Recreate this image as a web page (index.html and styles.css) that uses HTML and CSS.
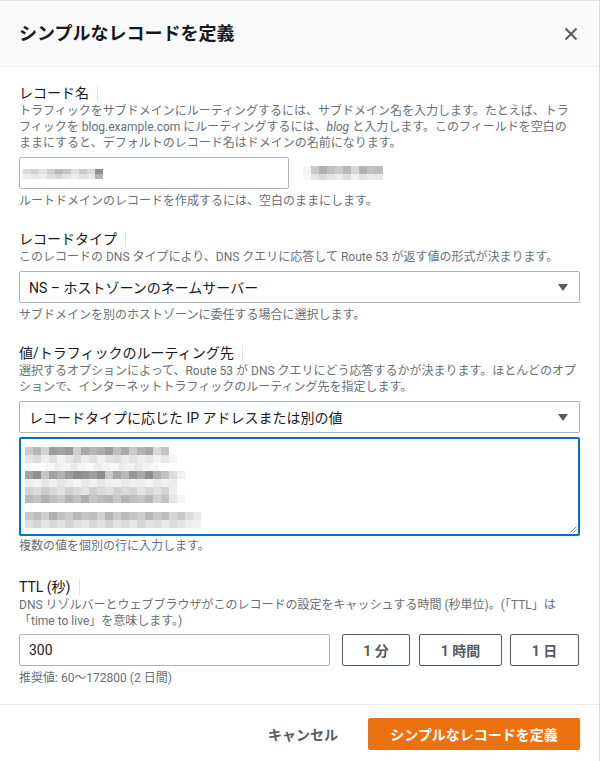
FILE: index.html
```html
<!DOCTYPE html>
<html lang="ja">
<head>
<meta charset="utf-8">
<title>シンプルなレコードを定義</title>
<link rel="stylesheet" href="styles.css">
</head>
<body>
<div class="modal">
  <header class="modal-header">
    <h2 class="title">シンプルなレコードを定義</h2>
    <button class="close" aria-label="閉じる">
      <svg width="14" height="14" viewBox="0 0 14 14"><path d="M1.5 1.5L12.5 12.5M12.5 1.5L1.5 12.5" stroke="#545b64" stroke-width="2" fill="none"/></svg>
    </button>
  </header>

  <div class="modal-body">
    <section class="field">
      <div class="label">レコード名<span class="info"></span></div>
      <p class="desc">トラフィックをサブドメインにルーティングするには、サブドメイン名を入力します。たとえば、トラ<br>フィックを blog.example.com にルーティングするには、<i>blog</i> と入力します。このフィールドを空白の<br>ままにすると、デフォルトのレコード名はドメインの名前になります。</p>
      <div class="control-row">
        <div class="input input-name"><span class="mz mz-name"></span></div>
        <span class="mz mz-domain"></span>
      </div>
      <p class="hint">ルートドメインのレコードを作成するには、空白のままにします。</p>
    </section>

    <section class="field">
      <div class="label">レコードタイプ<span class="info"></span></div>
      <p class="desc">このレコードの DNS タイプにより、DNS クエリに応答して Route 53 が返す値の形式が決まります。</p>
      <div class="control-row">
        <div class="select"><span>NS – ホストゾーンのネームサーバー</span><svg class="caret" width="10" height="7" viewBox="0 0 10 7"><path d="M0 0H10L5 7Z" fill="#545b64"/></svg></div>
      </div>
      <p class="hint">サブドメインを別のホストゾーンに委任する場合に選択します。</p>
    </section>

    <section class="field">
      <div class="label">値/トラフィックのルーティング先<span class="info"></span></div>
      <p class="desc">選択するオプションによって、Route 53 が DNS クエリにどう応答するかが決まります。ほとんどのオプ<br>ションで、インターネットトラフィックのルーティング先を指定します。</p>
      <div class="control-row">
        <div class="select"><span>レコードタイプに応じた IP アドレスまたは別の値</span><svg class="caret" width="10" height="7" viewBox="0 0 10 7"><path d="M0 0H10L5 7Z" fill="#545b64"/></svg></div>
      </div>
      <div class="textarea">
        <span class="mz ra"></span>
        <span class="mz rb"></span>
        <span class="mz rc"></span>
        <span class="mz rd"></span>
        <span class="mz re"></span>
        <span class="mz rf"></span>
        <span class="mz rg"></span>
        <span class="mz gap"></span>
        <span class="mz rh"></span>
        <span class="mz ri"></span>
        <svg class="grip" width="8" height="8" viewBox="0 0 8 8"><path d="M7.5 1.5L1.5 7.5M7.5 4.5L4.5 7.5" stroke="#7d8998" stroke-width="1" fill="none"/></svg>
      </div>
      <p class="hint hint-tight">複数の値を個別の行に入力します。</p>
    </section>

    <section class="field field-ttl">
      <div class="label">TTL (秒)<span class="info"></span></div>
      <p class="desc">DNS リゾルバーとウェブブラウザがこのレコードの設定をキャッシュする時間 (秒単位)。(「TTL」は<br>「time to live」を意味します。)</p>
      <div class="control-row ttl-row">
        <div class="input input-ttl">300</div>
        <button class="btn btn-1m">1 分</button>
        <button class="btn btn-1h">1 時間</button>
        <button class="btn btn-1d">1 日</button>
      </div>
      <p class="hint">推奨値: 60～172800 (2 日間)</p>
    </section>
  </div>

  <footer class="modal-footer">
    <button class="link-btn">キャンセル</button>
    <button class="primary-btn">シンプルなレコードを定義</button>
  </footer>
</div>
</body>
</html>
```

FILE: styles.css
```css
* { box-sizing: border-box; }

html, body {
  margin: 0;
  padding: 0;
  background: #ffffff;
}

body {
  font-family: Roboto, "Noto Sans CJK JP", sans-serif;
  color: #16191f;
}

.modal {
  width: 600px;
  min-height: 761px;
  border-top: 1px solid #e4e6e6;
  border-right: 1px solid #d5dbdb;
  background: #ffffff;
}

.modal-header {
  height: 66px;
  display: flex;
  align-items: center;
  padding: 0 21px 0 19px;
  background: #fafafa;
  border-bottom: 1px solid #eaeded;
}

.title {
  margin: 0;
  font-size: 18px;
  line-height: 24px;
  font-weight: 700;
  color: #16191f;
}

.close {
  margin-left: auto;
  padding: 0;
  border: 0;
  background: none;
  width: 14px;
  height: 14px;
  display: flex;
}

.modal-body {
  padding: 16px 19px 18px;
}

.field + .field { margin-top: 20px; }
.field.field-ttl { margin-top: 23px; }

.label {
  display: flex;
  align-items: center;
  font-size: 14px;
  line-height: 20px;
  font-weight: 400;
  color: #16191f;
}

.info {
  width: 1px;
  height: 16px;
  background: #e1e4e4;
  margin-left: 8px;
}

.desc {
  margin: 0;
  font-size: 12px;
  line-height: 16px;
  color: #687078;
  white-space: nowrap;
}

.desc i { font-style: italic; }

.control-row {
  margin-top: 6px;
  display: flex;
  align-items: center;
}

.input {
  height: 32px;
  border: 1px solid #aab7b8;
  border-radius: 2px;
  padding: 0 9px;
  display: flex;
  align-items: center;
  font-size: 14px;
  color: #16191f;
  background: #fff;
}

.input-name {
  width: 270px;
  padding: 0 3px;
}

.hint {
  margin: 4px 0 0;
  font-size: 12px;
  line-height: 16px;
  color: #687078;
}

.hint-tight { margin-top: 2px; }

.select {
  width: 100%;
  height: 32px;
  border: 1px solid #aab7b8;
  border-radius: 2px;
  padding: 0 11px 0 9px;
  display: flex;
  align-items: center;
  justify-content: space-between;
  font-size: 14px;
  color: #16191f;
}

.textarea {
  position: relative;
  margin-top: 4px;
  height: 99px;
  border: 2px solid #0073bb;
  border-radius: 2px;
  padding: 8px 4px;
}

.grip {
  position: absolute;
  right: 1px;
  bottom: 1px;
}

/* pixelated (blurred-out) values */
.mz {
  display: block;
  height: 8px;
}

.mz-name {
  height: 10px;
  width: 80px;
  margin-top: 2px;
  background:
    linear-gradient(90deg, #dcdcdc 0 8px, #d2d2d2 8px 16px, #e2e2e2 16px 24px, #cfcfcf 24px 32px, #b9b9b9 32px 40px, #c6c6c6 40px 48px, #e0e0e0 48px 56px, #cdcdcd 56px 64px, #d9d9d9 64px 72px, #8f8f8f 72px 80px) top / 100% 5px no-repeat,
    linear-gradient(90deg, #eeeeee 0 8px, #e6e6e6 8px 16px, #ededed 16px 24px, #dddddd 24px 32px, #d6d6d6 32px 40px, #e3e3e3 40px 48px, #eeeeee 48px 56px, #e1e1e1 56px 64px, #e9e9e9 64px 72px, #b5b5b5 72px 80px) bottom / 100% 5px no-repeat;
}

.mz-domain {
  width: 80px;
  height: 14px;
  margin-left: 14px;
  background:
    linear-gradient(90deg, #f4f4f4 0 8px, #c9c9c9 8px 16px, #b0b0b0 16px 24px, #bfbfbf 24px 32px, #cacaca 32px 40px, #b7b7b7 40px 48px, #d8d8d8 48px 56px, #b3b3b3 56px 64px, #c2c2c2 64px 72px, #bdbdbd 72px 80px) top / 100% 8px no-repeat,
    linear-gradient(90deg, #f7f7f7 0 8px, #e6e6e6 8px 16px, #dadada 16px 24px, #e4e4e4 24px 32px, #ececec 32px 40px, #dfdfdf 40px 48px, #f0f0f0 48px 56px, #e2e2e2 56px 64px, #ebebeb 64px 72px, #e7e7e7 72px 80px) bottom / 100% 6px no-repeat;
}

.ra {
  width: 144px;
  background: linear-gradient(90deg, #c9c9c9 0 8px, #b4b4b4 8px 16px, #d2d2d2 16px 24px, #9d9d9d 24px 32px, #a3a3a3 32px 40px, #9a9a9a 40px 48px, #cfcfcf 48px 56px, #a8a8a8 56px 64px, #b6b6b6 64px 72px, #aeaeae 72px 80px, #9c9c9c 80px 88px, #bdbdbd 88px 96px, #a9a9a9 96px 104px, #cacaca 104px 112px, #b3b3b3 112px 120px, #a6a6a6 120px 128px, #d9d9d9 128px 136px, #c4c4c4 136px 144px);
}

.rb {
  width: 152px;
  background: linear-gradient(90deg, #e4e4e4 0 8px, #dcdcdc 8px 16px, #efefef 16px 24px, #e0e0e0 24px 32px, #f2f2f2 32px 40px, #e6e6e6 40px 48px, #dadada 48px 56px, #ececec 56px 64px, #e1e1e1 64px 72px, #f0f0f0 72px 80px, #e3e3e3 80px 88px, #dedede 88px 96px, #ebebeb 96px 104px, #e2e2e2 104px 112px, #eeeeee 112px 120px, #e7e7e7 120px 128px, #f3f3f3 128px 136px, #e9e9e9 136px 144px, #f5f5f5 144px 152px);
}

.rc {
  width: 112px;
  margin-left: 21px;
  background: linear-gradient(90deg, #f6f6f6 0 8px, #eeeeee 8px 16px, #f3f3f3 16px 24px, #ebebeb 24px 32px, #f5f5f5 32px 40px, #fafafa 40px 48px, #ededed 48px 56px, #f4f4f4 56px 64px, #f8f8f8 64px 72px, #ececec 72px 80px, #f1f1f1 80px 88px, #e9e9e9 88px 96px, #f3f3f3 96px 104px, #f7f7f7 104px 112px);
}

.rd {
  width: 160px;
  background: linear-gradient(90deg, #a4a4a4 0 8px, #8f8f8f 8px 16px, #c6c6c6 16px 24px, #a0a0a0 24px 32px, #b2b2b2 32px 40px, #9b9b9b 40px 48px, #8a8a8a 48px 56px, #949494 56px 64px, #9e9e9e 64px 72px, #8c8c8c 72px 80px, #c9c9c9 80px 88px, #a5a5a5 88px 96px, #b9b9b9 96px 104px, #969696 104px 112px, #a8a8a8 112px 120px, #8e8e8e 120px 128px, #b0b0b0 128px 136px, #c2c2c2 136px 144px, #dcdcdc 144px 152px, #f0f0f0 152px 160px);
}

.re {
  width: 152px;
  background: linear-gradient(90deg, #eeeeee 0 8px, #f4f4f4 8px 16px, #e8e8e8 16px 24px, #f1f1f1 24px 32px, #e5e5e5 32px 40px, #ededed 40px 48px, #f6f6f6 48px 56px, #e9e9e9 56px 64px, #f2f2f2 64px 72px, #e6e6e6 72px 80px, #efefef 80px 88px, #f3f3f3 88px 96px, #e7e7e7 96px 104px, #f0f0f0 104px 112px, #ebebeb 112px 120px, #f5f5f5 120px 128px, #e9e9e9 128px 136px, #f2f2f2 136px 144px, #ececec 144px 152px);
}

.rf {
  width: 152px;
  background: linear-gradient(90deg, #d4d4d4 0 8px, #dddddd 8px 16px, #cdcdcd 16px 24px, #d8d8d8 24px 32px, #e2e2e2 32px 40px, #d1d1d1 40px 48px, #dadada 48px 56px, #e4e4e4 56px 64px, #cecece 64px 72px, #d9d9d9 72px 80px, #e0e0e0 80px 88px, #d0d0d0 88px 96px, #dbdbdb 96px 104px, #d3d3d3 104px 112px, #e3e3e3 112px 120px, #d6d6d6 120px 128px, #dfdfdf 128px 136px, #d2d2d2 136px 144px, #ececec 144px 152px);
}

.rg {
  width: 160px;
  background: linear-gradient(90deg, #b9b9b9 0 8px, #c3c3c3 8px 16px, #b1b1b1 16px 24px, #bebebe 24px 32px, #c8c8c8 32px 40px, #b4b4b4 40px 48px, #c0c0c0 48px 56px, #aeaeae 56px 64px, #c5c5c5 64px 72px, #bbbbbb 72px 80px, #b6b6b6 80px 88px, #c9c9c9 88px 96px, #b3b3b3 96px 104px, #bfbfbf 104px 112px, #c6c6c6 112px 120px, #b8b8b8 120px 128px, #d1d1d1 128px 136px, #c4c4c4 136px 144px, #e6e6e6 144px 152px, #f4f4f4 152px 160px);
}

.mz.gap { height: 9px; }

.rh {
  width: 176px;
  background: linear-gradient(90deg, #c7c7c7 0 8px, #bcbcbc 8px 16px, #d0d0d0 16px 24px, #b0b0b0 24px 32px, #c2c2c2 32px 40px, #cbcbcb 40px 48px, #b8b8b8 48px 56px, #c5c5c5 56px 64px, #bfbfbf 64px 72px, #d2d2d2 72px 80px, #b5b5b5 80px 88px, #c9c9c9 88px 96px, #bababa 96px 104px, #c4c4c4 104px 112px, #cecece 112px 120px, #b7b7b7 120px 128px, #c8c8c8 128px 136px, #bdbdbd 136px 144px, #d5d5d5 144px 152px, #cacaca 152px 160px, #dddddd 160px 168px, #e8e8e8 168px 176px);
}

.ri {
  width: 176px;
  background: linear-gradient(90deg, #e0e0e0 0 8px, #d6d6d6 8px 16px, #e5e5e5 16px 24px, #d9d9d9 24px 32px, #e2e2e2 32px 40px, #d3d3d3 40px 48px, #dedede 48px 56px, #e7e7e7 56px 64px, #d8d8d8 64px 72px, #e1e1e1 72px 80px, #d5d5d5 80px 88px, #e4e4e4 88px 96px, #dadada 96px 104px, #e6e6e6 104px 112px, #d7d7d7 112px 120px, #e3e3e3 120px 128px, #dcdcdc 128px 136px, #e8e8e8 136px 144px, #dbdbdb 144px 152px, #e5e5e5 152px 160px, #eeeeee 160px 168px, #f2f2f2 168px 176px);
}

/* TTL row */
.ttl-row { margin-top: 5px; }

.input-ttl {
  width: 311px;
  margin-right: 12px;
}

.btn {
  height: 32px;
  padding: 0;
  border: 1px solid #545b64;
  border-radius: 2px;
  background: #ffffff;
  color: #545b64;
  font-family: Roboto, "Noto Sans CJK JP", sans-serif;
  font-size: 14px;
  font-weight: 700;
  white-space: nowrap;
  display: flex;
  align-items: center;
  justify-content: center;
  flex: none;
}

.btn-1m { width: 68px; margin-right: 9px; }
.btn-1h { width: 83px; margin-right: 8px; }
.btn-1d { width: 69px; }

/* footer */
.modal-footer {
  border-top: 1px solid #eaeded;
  padding: 13px 19px 0;
  display: flex;
  justify-content: flex-end;
  gap: 8px;
}

.link-btn,
.primary-btn {
  height: 32px;
  padding: 0 22px;
  border: 0;
  border-radius: 2px;
  font-family: Roboto, "Noto Sans CJK JP", sans-serif;
  font-size: 14px;
  font-weight: 700;
  white-space: nowrap;
}

.link-btn {
  background: transparent;
  color: #545b64;
}

.primary-btn {
  width: 212px;
  background: #ec7211;
  color: #ffffff;
}
```
